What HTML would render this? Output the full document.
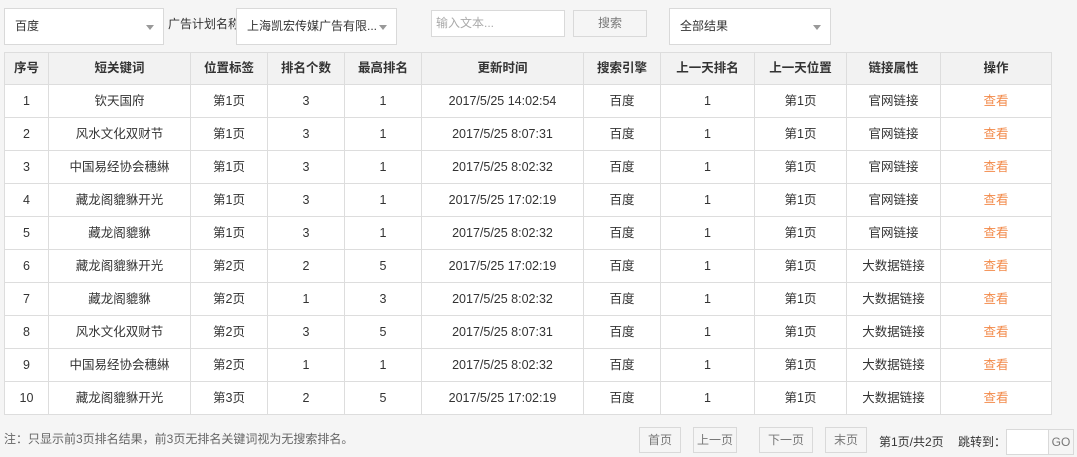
<!DOCTYPE html>
<html><head><meta charset="utf-8"><style>
body{margin:0;width:1077px;height:457px;background:#f5f5f5;font-family:"Liberation Sans","Noto Sans CJK SC",sans-serif;font-size:12px;color:#333;position:relative;overflow:hidden}
.a{position:absolute;box-sizing:border-box}
.sel{background:#fff;border:1px solid #d9d9d9;height:37px;top:8px;line-height:35px;padding-left:10px;font-size:12px}
.sel:after{content:"";position:absolute;right:9px;top:16px;border:4px solid transparent;border-top:5px solid #999}
table{position:absolute;left:4px;top:52px;border-collapse:collapse;background:#fff;table-layout:fixed}
td,th{border:1px solid #ddd;height:32px;text-align:center;padding:0;font-size:12.5px;color:#333;vertical-align:middle}
td span,th span{display:block;height:32px;line-height:32px}
th span{height:31px;line-height:31px}
th{background:#f2f2f2;font-weight:bold;height:31px}
td.o{color:#f28a4a}
.btn{border:1px solid #d9d9d9;background:#f5f5f5;color:#777;text-align:center;top:427px;height:26px;line-height:24px;font-size:12px}
</style></head><body>
<div class="a sel" style="left:4px;width:160px">百度</div>
<div class="a" style="left:168px;top:15px;width:68px;overflow:hidden;white-space:nowrap">广告计划名称</div>
<div class="a sel" style="left:236px;width:161px">上海凯宏传媒广告有限...</div>
<div class="a" style="left:431px;top:10px;width:134px;height:27px;border:1px solid #d9d9d9;background:#fff;color:#aaa;line-height:25px;padding-left:4px">输入文本...</div>
<div class="a btn" style="left:573px;top:10px;width:74px;height:27px;line-height:25px">搜索</div>
<div class="a sel" style="left:669px;width:162px">全部结果</div>
<table id="t">
<colgroup><col style="width:44px"><col style="width:142px"><col style="width:77px"><col style="width:77px"><col style="width:77px"><col style="width:162px"><col style="width:77px"><col style="width:94px"><col style="width:92px"><col style="width:94px"><col style="width:111px"></colgroup>
<tr><th><span>序号</span></th><th><span>短关键词</span></th><th><span>位置标签</span></th><th><span>排名个数</span></th><th><span>最高排名</span></th><th><span>更新时间</span></th><th><span>搜索引擎</span></th><th><span>上一天排名</span></th><th><span>上一天位置</span></th><th><span>链接属性</span></th><th><span>操作</span></th></tr>
<tr><td><span>1</span></td><td><span>钦天国府</span></td><td><span>第1页</span></td><td><span>3</span></td><td><span>1</span></td><td><span>2017/5/25 14:02:54</span></td><td><span>百度</span></td><td><span>1</span></td><td><span>第1页</span></td><td><span>官网链接</span></td><td class="o"><span>查看</span></td></tr>
<tr><td><span>2</span></td><td><span>风水文化双财节</span></td><td><span>第1页</span></td><td><span>3</span></td><td><span>1</span></td><td><span>2017/5/25 8:07:31</span></td><td><span>百度</span></td><td><span>1</span></td><td><span>第1页</span></td><td><span>官网链接</span></td><td class="o"><span>查看</span></td></tr>
<tr><td><span>3</span></td><td><span>中国易经协会穗綝</span></td><td><span>第1页</span></td><td><span>3</span></td><td><span>1</span></td><td><span>2017/5/25 8:02:32</span></td><td><span>百度</span></td><td><span>1</span></td><td><span>第1页</span></td><td><span>官网链接</span></td><td class="o"><span>查看</span></td></tr>
<tr><td><span>4</span></td><td><span>藏龙阁貔貅开光</span></td><td><span>第1页</span></td><td><span>3</span></td><td><span>1</span></td><td><span>2017/5/25 17:02:19</span></td><td><span>百度</span></td><td><span>1</span></td><td><span>第1页</span></td><td><span>官网链接</span></td><td class="o"><span>查看</span></td></tr>
<tr><td><span>5</span></td><td><span>藏龙阁貔貅</span></td><td><span>第1页</span></td><td><span>3</span></td><td><span>1</span></td><td><span>2017/5/25 8:02:32</span></td><td><span>百度</span></td><td><span>1</span></td><td><span>第1页</span></td><td><span>官网链接</span></td><td class="o"><span>查看</span></td></tr>
<tr><td><span>6</span></td><td><span>藏龙阁貔貅开光</span></td><td><span>第2页</span></td><td><span>2</span></td><td><span>5</span></td><td><span>2017/5/25 17:02:19</span></td><td><span>百度</span></td><td><span>1</span></td><td><span>第1页</span></td><td><span>大数据链接</span></td><td class="o"><span>查看</span></td></tr>
<tr><td><span>7</span></td><td><span>藏龙阁貔貅</span></td><td><span>第2页</span></td><td><span>1</span></td><td><span>3</span></td><td><span>2017/5/25 8:02:32</span></td><td><span>百度</span></td><td><span>1</span></td><td><span>第1页</span></td><td><span>大数据链接</span></td><td class="o"><span>查看</span></td></tr>
<tr><td><span>8</span></td><td><span>风水文化双财节</span></td><td><span>第2页</span></td><td><span>3</span></td><td><span>5</span></td><td><span>2017/5/25 8:07:31</span></td><td><span>百度</span></td><td><span>1</span></td><td><span>第1页</span></td><td><span>大数据链接</span></td><td class="o"><span>查看</span></td></tr>
<tr><td><span>9</span></td><td><span>中国易经协会穗綝</span></td><td><span>第2页</span></td><td><span>1</span></td><td><span>1</span></td><td><span>2017/5/25 8:02:32</span></td><td><span>百度</span></td><td><span>1</span></td><td><span>第1页</span></td><td><span>大数据链接</span></td><td class="o"><span>查看</span></td></tr>
<tr><td><span>10</span></td><td><span>藏龙阁貔貅开光</span></td><td><span>第3页</span></td><td><span>2</span></td><td><span>5</span></td><td><span>2017/5/25 17:02:19</span></td><td><span>百度</span></td><td><span>1</span></td><td><span>第1页</span></td><td><span>大数据链接</span></td><td class="o"><span>查看</span></td></tr>
</table>
<div class="a" style="left:4px;top:430px;color:#666">注：只显示前3页排名结果，前3页无排名关键词视为无搜索排名。</div>
<div class="a btn" style="left:639px;width:42px">首页</div>
<div class="a btn" style="left:693px;width:44px">上一页</div>
<div class="a btn" style="left:759px;width:54px">下一页</div>
<div class="a btn" style="left:825px;width:42px">末页</div>
<div class="a" style="left:879px;top:433px">第1页/共2页</div>
<div class="a" style="left:958px;top:433px">跳转到：</div>
<div class="a" style="left:1006px;top:429px;width:43px;height:26px;border:1px solid #d9d9d9;background:#fff"></div>
<div class="a btn" style="left:1048px;top:429px;width:26px;background:#f5f5f5">GO</div>
</body></html>
